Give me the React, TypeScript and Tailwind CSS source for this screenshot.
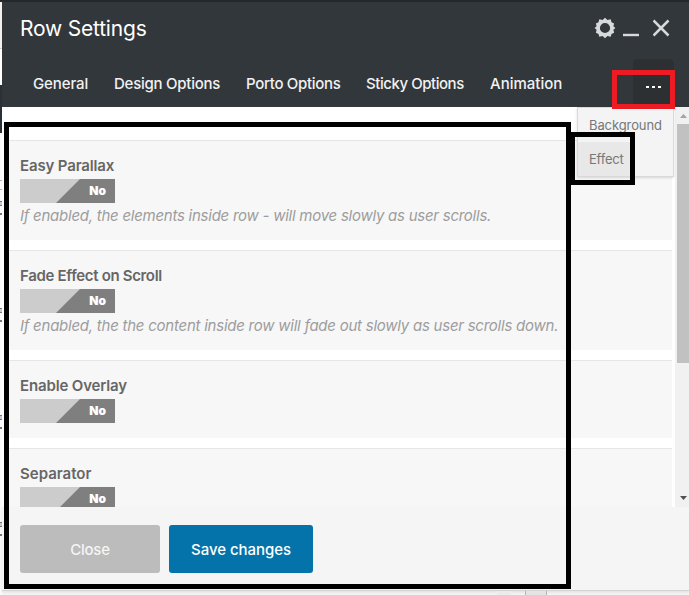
import clsx from "clsx";

const tabs = [
  { label: "General", className: "w-[81px] tracking-[-0.1px]" },
  { label: "Design Options", className: "w-[132px] tracking-[-0.25px]" },
  { label: "Porto Options", className: "w-[120px] tracking-[-0.3px]" },
  { label: "Sticky Options", className: "w-[124px] tracking-[-0.45px]" },
  { label: "Animation", className: "w-[98px]" },
];

const rows = [
  {
    title: "Easy Parallax",
    titleClass: "tracking-[-0.15px]",
    hint: "If enabled, the elements inside row - will move slowly as user scrolls.",
    hintClass: "tracking-[-0.25px]",
    height: "h-[100px]",
  },
  {
    title: "Fade Effect on Scroll",
    titleClass: "tracking-[-0.33px]",
    hint: "If enabled, the the content inside row will fade out slowly as user scrolls down.",
    hintClass: "tracking-[-0.24px]",
    height: "h-[100px]",
  },
  { title: "Enable Overlay", titleClass: "tracking-[-0.15px]", height: "h-[78px]" },
  { title: "Separator", titleClass: "tracking-normal", height: "h-[100px]" },
];

const Toggle = () => (
  <div className="relative flex h-6 w-[95px] items-center justify-end bg-[#ccc] pr-[9px]">
    <svg className="absolute inset-0" width="95" height="24" viewBox="0 0 95 24">
      <path d="M60 0H95V24H36Z" fill="#7f7f7f" />
    </svg>
    <span className="relative text-[12px] leading-6 font-black text-white">No</span>
  </div>
);

const Header = () => (
  <header className="flex h-[105px] shrink-0 flex-col justify-between bg-[#32373c]">
    <div className="flex h-[52px] items-center justify-between pr-[18px] pl-[18px]">
      <h1 className="pt-0.5 text-[21px] leading-[50px] tracking-[-0.2px] whitespace-nowrap text-white">Row Settings</h1>
      <div className="flex items-center text-[#d8d9da]">
        <svg width="22" height="22" viewBox="0 0 22 22" fill="currentColor" fillRule="evenodd">
          <path d="M11 .7 13.4 3 16.7 2.2 17.5 5.2 20.1 6.4 19.4 9.3 21.4 11 19.4 12.8 20.1 15.7 17.5 16.9 16.7 19.8 13.4 19 11 21.3 8.6 19 5.3 19.8 4.5 16.9 1.9 15.7 2.6 12.8.6 11 2.6 9.3 1.9 6.4 4.5 5.2 5.3 2.2 8.6 3ZM11 5.9A5.1 5.1 0 1 0 11 16.1A5.1 5.1 0 1 0 11 5.9Z" />
        </svg>
        <svg className="ml-[7px]" width="17" height="22" viewBox="0 0 17 22">
          <path d="M0 18H16" stroke="currentColor" strokeWidth="2.4" />
        </svg>
        <svg className="mr-px ml-[13px]" width="17" height="22" viewBox="0 0 17 22">
          <path d="M.5 3.5 15.5 18.5M15.5 3.5 .5 18.5" stroke="currentColor" strokeWidth="2.5" />
        </svg>
      </div>
    </div>
    <nav className="flex h-12 pl-[18px] text-[15px] leading-[50px] font-medium whitespace-nowrap text-[#f1f1f1]">
      {tabs.map((tab) => (
        <button key={tab.label} className={clsx("h-[50px] shrink-0 px-[13px] text-left", tab.className)}>
          {tab.label}
        </button>
      ))}
      <button className="mr-[15px] ml-auto flex w-[41px] items-center justify-center gap-[3px] rounded-t-[5px] bg-[#2c3033] pt-[7px]">
        <span className="h-0.5 w-[3px] bg-white" />
        <span className="h-0.5 w-[3px] bg-white" />
        <span className="h-0.5 w-[3px] bg-white" />
      </button>
    </nav>
  </header>
);

const Scrollbar = () => (
  <div className="flex h-full w-[14px] shrink-0 flex-col items-end bg-[#f1f1f1]">
    <svg width="14" height="17" viewBox="0 0 14 17">
      <path d="M5 11 8.5 7 12 11Z" fill="#a3a3a3" />
    </svg>
    <div className="h-[239px] w-3 bg-[#c1c1c1]" />
    <svg className="mt-auto" width="14" height="17" viewBox="0 0 14 17">
      <path d="M5 6H12L8.5 10Z" fill="#505050" />
    </svg>
  </div>
);

const App = () => {
  return (
    <div className="relative flex h-[595px] w-[689px] overflow-hidden bg-[#f7f7f7] font-[Inter,sans-serif]">
      {/* sliver of the page behind the dialog */}
      <div className="flex w-0.5 shrink-0 flex-col bg-[#fbfbfc]">
        <div className="h-0.5 bg-[#23282d]" />
        <div className="h-[46px] bg-[#f1f1f1]" />
        <div className="h-px bg-[#ccc]" />
        <div className="h-9 bg-white" />
        <div className="h-12 bg-[#2b3036]" />
        <div className="mt-[47px] h-[10px] border-y border-[#c8a8a0]" />
        <div className="mt-[11px] h-[5px] border-y border-[#777] bg-[#c3ccd6]" />
        <div className="mt-[7px] h-0.5 bg-[#777]" />
        <div className="mt-[93px] h-[5px] border-y border-[#777] bg-[#c3ccd6]" />
        <div className="mt-[7px] h-0.5 bg-[#777]" />
        <div className="mt-[93px] h-[5px] border-y border-[#777] bg-[#c3ccd6]" />
        <div className="mt-[7px] h-0.5 bg-[#777]" />
        <div className="mt-[93px] h-[5px] border-y border-[#777] bg-[#c3ccd6]" />
        <div className="mt-[7px] h-0.5 bg-[#777]" />
      </div>

      <div className="flex w-[687px] flex-col">
        <div className="h-0.5 shrink-0 bg-[#23282d]" />
        <Header />
        <main className="flex h-[400px] shrink-0 overflow-hidden bg-white">
          <div className="flex w-[670px] shrink-0 flex-col gap-[10px] pt-[33px] pl-[3px]">
            {rows.map((row) => (
              <section
                key={row.title}
                className={clsx("shrink-0 border-t border-[#e6e6e6] bg-[#f7f7f7] pt-[14px] pl-[15px]", row.height)}
              >
                <h2 className={clsx("h-6 text-[15px] leading-[22px] font-semibold whitespace-nowrap text-[#666]", row.titleClass)}>
                  {row.title}
                </h2>
                <Toggle />
                {row.hint && (
                  <p className={clsx("text-[15px] leading-[26px] whitespace-nowrap text-[#9d9d9d] italic", row.hintClass)}>
                    {row.hint}
                  </p>
                )}
              </section>
            ))}
          </div>
          <div className="ml-[3px]">
            <Scrollbar />
          </div>
        </main>
        <footer className="flex h-[84px] shrink-0 gap-[9px] border-b border-[#d2d2d2] bg-[#f5f5f5] pt-[18px] pl-[18px] shadow-[0_2px_3px_rgba(0,0,0,0.08)]">
          <button className="h-12 w-[140px] rounded-[3px] bg-[#bcbcbc] pt-0.5 text-[15px] font-medium tracking-[-0.2px] text-[#f5f5f5]">
            Close
          </button>
          <button className="h-12 w-36 rounded-[3px] bg-[#0473aa] pt-0.5 text-[15px] font-medium tracking-[-0.05px] whitespace-nowrap text-white">
            Save changes
          </button>
        </footer>
        <div className="flex h-1 pl-[495px]">
          <div className="w-[14px] bg-[#ebebeb]" />
          <div className="ml-[14px] w-[22px] border-x border-[#b5b5b5] bg-[#e4e4e4]" />
        </div>
      </div>

      {/* overflow menu of the tab bar */}
      <div className="absolute top-[107px] left-[577px] h-[70px] w-[97px] border border-[#d9d9d9] bg-[#f4f4f4] text-[13px] text-[#777] shadow-sm">
        <div className="h-[34px] pl-[11px] leading-[34px] tracking-[-0.1px]">Background</div>
        <div className="h-[34px] w-[54px] bg-[#e8e8e8] pl-[11px] leading-[34px] tracking-[-0.2px]">Effect</div>
      </div>

      {/* callouts */}
      <div className="absolute top-[122px] left-1 h-[467px] w-[567px] border-5 border-black" />
      <div className="absolute top-[132px] left-[570px] h-[53px] w-[65px] border-5 border-black" />
      <div className="absolute top-[70px] left-[612px] h-[39px] w-[63px] border-5 border-[#ed1c24]" />
    </div>
  );
};

export default App;
